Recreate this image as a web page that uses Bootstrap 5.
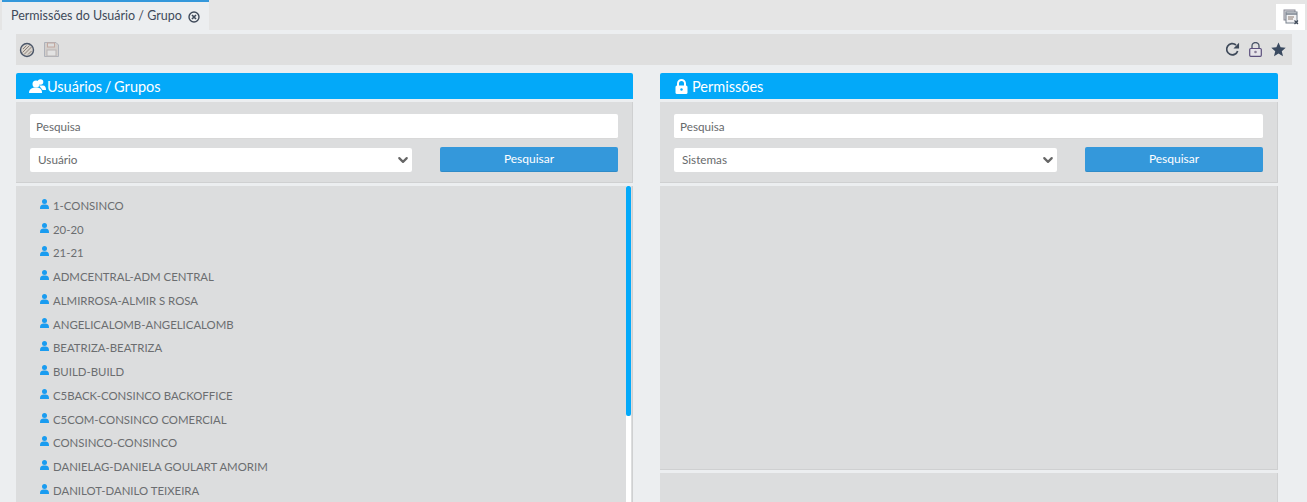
<!DOCTYPE html>
<html lang="pt"><head><meta charset="utf-8"><title>Permissões</title>
<link href="https://cdn.jsdelivr.net/npm/bootstrap@5.3.0/dist/css/bootstrap.min.css" rel="stylesheet">
<style>
html,body{height:502px;overflow:hidden}
body{background:#eceef0;font-family:Lato,"Liberation Sans",sans-serif;font-size:12px;color:#676a6c}
.tabstrip{height:30px;background:#e5e5e5;padding-left:2px;justify-content:space-between}
.tabitem{width:207px;height:31px;background:#eceef0;border-top:2px solid #3498db;padding:0 0 0 9px;font-size:12.5px;color:#3f4a5a;gap:6px;position:relative;z-index:1}
.closebox{width:29px;height:26px;background:#fff;margin:4px 2px 0 0}
.wrap{padding:4px 15px 0 16px}
.toolbar{height:31px;background:#dfdfdf;padding:0 6px 0 3px}
.toolgroup{gap:9px}
.cols{display:grid;grid-template-columns:617px 618px;column-gap:27px;margin-top:8px}
.head{height:26px;background:#03a9f9;color:#fff;font-size:14.5px;word-spacing:-1px;padding-left:13px;gap:1px;border-radius:2px 2px 0 0}
.head span{position:relative;top:1px}
.head .permtitle{margin-left:3px}
.head .lockico{margin-left:2px}
.formbox{height:81px;background:#dcddde;margin-top:3px;padding:12px 14px 0 14px;border-right:1px solid #cfd0d1;border-bottom:1px solid #cfd0d1}
.fld{height:25px;border:0;border-bottom:1px solid #d8d8d8;border-radius:2px;font-size:11.7px;color:#676a6c;padding:0 6px;background:#fff;box-shadow:none;min-height:0}
.fld::placeholder{color:#676a6c;opacity:1}
.selrow{margin-top:9px;gap:28px}
.selrow .form-select{flex:1;height:24px;padding:0 24px 0 8px;border:0;border-radius:2px;font-size:11.7px;color:#676a6c;background-position:right 3px center;background-size:12px 10px;min-height:0;background-image:url("data:image/svg+xml,%3csvg xmlns='http://www.w3.org/2000/svg' viewBox='0 0 16 16'%3e%3cpath fill='none' stroke='%23666' stroke-linecap='round' stroke-linejoin='round' stroke-width='3.500' d='m2 5 6 6 6-6'/%3e%3c/svg%3e")}
.go{width:178px;height:25px;padding:0;margin-top:-1px;background:#3498db;border:0;border-bottom:1px solid #2f8bc8;border-radius:2px;color:#fff;font-size:12px;flex:none}
.lstbox{height:316px;margin-top:3px;background:#dcddde;position:relative;border-right:1px solid #cfd0d1;padding:7.5px 0 0 24px;overflow:hidden}
.lstbox ul{margin:0;padding:0;list-style:none}
.lstbox li{height:23.75px;font-size:11.4px;color:#6b6d70;text-transform:uppercase;gap:4px;white-space:nowrap}
.lstbox li svg{margin-top:-3px}
.track{position:absolute;top:0;right:1px;width:5px;height:100%;background:#fff}
.thumb{position:absolute;top:0;left:0;width:5px;height:230px;background:#03a9f9;border-radius:2px}
.rightbox{height:284px;margin-top:3px;background:#dcddde;border-right:1px solid #cfd0d1;border-bottom:1px solid #cfd0d1}
.rightbelow{height:29px;margin-top:3px;background:#dcddde;border-right:1px solid #cfd0d1}
</style></head><body>
<div class="tabstrip d-flex align-items-start">
  <div class="tabitem d-flex align-items-center">Permissões do Usuário / Grupo
    <svg width="12" height="12" viewBox="0 0 12 12"><circle cx="6" cy="6" r="5" fill="none" stroke="#3f4a5a" stroke-width="1.4"/><path d="M4 4l4 4M8 4l-4 4" stroke="#3f4a5a" stroke-width="1.6"/></svg>
  </div>
  <div class="closebox d-flex align-items-center justify-content-center">
    <svg width="16" height="16" viewBox="0 0 16 16"><rect x="1" y="1" width="11" height="10" fill="#d8d8dc" stroke="#8a8a96"/><rect x="3" y="3" width="11" height="11" fill="#f1f1f3" stroke="#77808c"/><path d="M3 5h11" stroke="#77808c" stroke-width="1.5"/><path d="M5 8h6M5 10h5" stroke="#8a7a70"/><path d="M11.500 11.500l3.500 3.500M15 11.500l-3.500 3.500" stroke="#3f4a5a" stroke-width="1.200"/></svg>
  </div>
</div>
<div class="wrap">
  <div class="toolbar d-flex align-items-center justify-content-between">
    <div class="d-flex align-items-center toolgroup">
      <svg width="16" height="16" viewBox="0 0 16 16"><circle cx="8" cy="8" r="6.500" fill="#d8d3cc" stroke="#4a5568" stroke-width="1.400"/><path d="M3.500 10.500l7-7M5 12.500l7.500-7.500M4 7l3.500-3.500M9 12.500l3.500-3.500" stroke="#8a7f78" stroke-width="1"/></svg>
      <svg width="15" height="15" viewBox="0 0 15 15"><path d="M.5.500h11.500l2.500 2.500v11.500H.5z" fill="#d3cfcc" stroke="#aeb2bb"/><rect x="3.500" y="1" width="7" height="4" fill="#dcdcdc" stroke="#c2a8a0"/><rect x="3" y="8" width="9" height="6" fill="#e2e2e2" stroke="#b9b4b4"/></svg>
    </div>
    <div class="d-flex align-items-center toolgroup">
      <svg width="15" height="15" viewBox="0 0 16 16"><path d="M13.500 9.500A6 6 0 1 1 11.700 3.200" fill="none" stroke="#3f4a5a" stroke-width="1.800"/><path d="M15 .8v6h-6z" fill="#3f4a5a"/></svg>
      <svg width="13" height="15" viewBox="0 0 13 15"><path d="M3 6.500V4a3.500 3.500 0 0 1 7 0v2.500" fill="none" stroke="#4a5568" stroke-width="1.300"/><rect x=".7" y="6.500" width="11.600" height="7.800" rx="1" fill="#e6e4ea" stroke="#5b4f7c" stroke-width="1.200"/><circle cx="6.500" cy="10" r="1.300" fill="#8a7f98"/></svg>
      <svg width="15" height="15" viewBox="0 0 15 15"><path d="M7.500.600l2.100 4.700 5.100.5-3.900 3.400 1.200 5L7.500 11.600l-4.500 2.600 1.200-5L.3 5.800l5.100-.5z" fill="#3a4a60"/></svg>
    </div>
  </div>
  <div class="cols">
    <section>
      <div class="head d-flex align-items-center">
        <svg width="17" height="15" viewBox="0 0 17 15" fill="#fff"><circle cx="11.500" cy="3" r="2.800"/><path d="M10 6.500h4c2 0 3 1.500 3 4.500h-3.500z"/><circle cx="7" cy="5" r="3.500"/><path d="M0 14c0-4 3-5.500 7-5.500s6 1.500 6 5.500z"/></svg>
        <span>Usuários / Grupos</span>
      </div>
      <div class="formbox">
        <input class="form-control fld" placeholder="Pesquisa">
        <div class="selrow d-flex align-items-start">
          <select class="form-select"><option>Usuário</option></select>
          <button class="btn go">Pesquisar</button>
        </div>
      </div>
      <div class="lstbox">
        <ul id="people"></ul>
        <div class="track"><div class="thumb"></div></div>
      </div>
    </section>
    <section>
      <div class="head d-flex align-items-center">
        <svg class="lockico" width="13" height="15" viewBox="0 0 13 15"><path d="M3 7V4.500a3.500 3.500 0 0 1 7 0V7" fill="none" stroke="#fff" stroke-width="2"/><rect x=".5" y="6.500" width="12" height="8.500" rx="1.500" fill="#fff"/><circle cx="6.500" cy="10.500" r="1.200" fill="#03a9f9"/></svg>
        <span class="permtitle">Permissões</span>
      </div>
      <div class="formbox">
        <input class="form-control fld" placeholder="Pesquisa">
        <div class="selrow d-flex align-items-start">
          <select class="form-select"><option>Sistemas</option></select>
          <button class="btn go">Pesquisar</button>
        </div>
      </div>
      <div class="rightbox"></div>
      <div class="rightbelow"></div>
    </section>
  </div>
</div>
<script>
var names=["1-CONSINCO","20-20","21-21","ADMCENTRAL-ADM CENTRAL","ALMIRROSA-ALMIR S ROSA","ANGELICALOMB-ANGELICALOMB","BEATRIZA-BEATRIZA","BUILD-BUILD","C5BACK-CONSINCO BACKOFFICE","C5COM-CONSINCO COMERCIAL","CONSINCO-CONSINCO","DANIELAG-DANIELA GOULART AMORIM","DANILOT-DANILO TEIXEIRA"];
document.getElementById('people').innerHTML=names.map(function(n){return '<li class="d-flex align-items-center"><svg width="9" height="10" viewBox="0 0 9 10" fill="#1a9cf0"><circle cx="4.500" cy="2.500" r="2.500"/><path d="M0 10c0-3.500 1-4.500 4.500-4.500S9 6.500 9 10z"/></svg><span>'+n+'</span></li>'}).join('');
</script>
<script src="https://cdn.jsdelivr.net/npm/bootstrap@5.3.0/dist/js/bootstrap.bundle.min.js"></script>
</body></html>
